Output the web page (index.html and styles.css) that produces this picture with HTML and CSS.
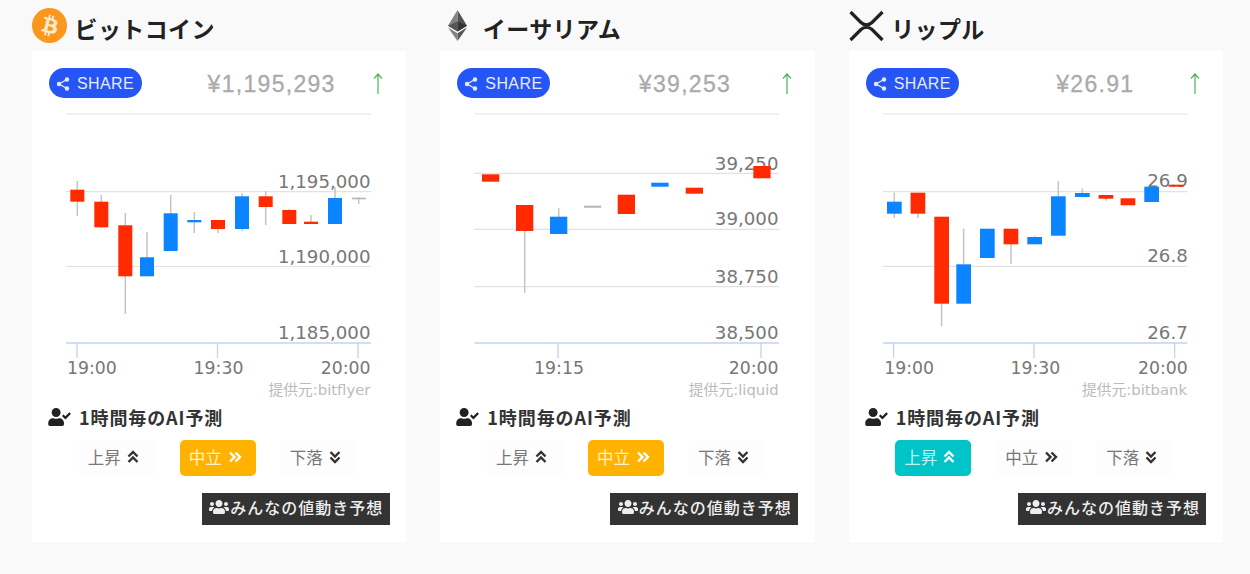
FILE: index.html
```html
<!DOCTYPE html>
<html lang="ja">
<head>
    <meta charset="UTF-8">
    <title>ビットコイン・イーサリアム・リップル</title>
    <link rel="stylesheet" href="styles.css">
</head>
<body>
<div class="coins">

    <!-- bitcoin -->
    <section class="coin">
        <h2 class="coin-title">
            <span class="coin-icon">
                <svg width="35" height="35" viewBox="0 0 32 32"><circle cx="16" cy="16" r="16" fill="#f9981c"/><path fill="#ffe9cc" d="M23.189 14.02c.314-2.096-1.283-3.223-3.465-3.975l.708-2.84-1.728-.43-.69 2.765c-.454-.114-.92-.22-1.385-.326l.695-2.783L15.596 6l-.708 2.839c-.376-.086-.746-.17-1.104-.26l.002-.009-2.384-.595-.46 1.846s1.283.294 1.256.312c.7.175.826.638.805 1.006l-.806 3.235c.048.012.11.03.18.057l-.183-.045-1.13 4.532c-.086.212-.303.531-.793.41.018.025-1.256-.313-1.256-.313l-.858 1.978 2.25.561c.418.105.828.215 1.231.318l-.715 2.872 1.727.43.708-2.84c.472.127.93.245 1.378.357l-.706 2.828 1.728.43.715-2.866c2.948.558 5.164.333 6.097-2.333.752-2.146-.037-3.385-1.588-4.192 1.13-.26 1.98-1.003 2.207-2.538zm-3.95 5.538c-.533 2.147-4.148.986-5.32.695l.95-3.805c1.172.293 4.929.872 4.37 3.11zm.535-5.569c-.487 1.953-3.495.96-4.47.717l.86-3.45c.975.243 4.118.696 3.61 2.733z"/></svg>
            </span>
            <span class="coin-name">ビットコイン</span>
        </h2>
        <div class="card">
            <div class="card-head">
                <a class="share">
                    <svg width="14" height="14" viewBox="0 0 14 14"><path class="share-line" d="M11 2.500 3 7l8 4.500"/><circle cx="11" cy="2.500" r="2.200"/><circle cx="3" cy="7" r="2.200"/><circle cx="11" cy="11.500" r="2.200"/></svg>
                    SHARE
                </a>
                <span class="price">¥1,195,293</span>
                <svg class="arrow" width="12" height="21" viewBox="0 0 12 21"><path d="M6 21V1M2 5.500 6 1l4 4.500"/></svg>
            </div>
            <svg class="chart" width="374" height="272" viewBox="32 108 374 272">
                <path class="grid" d="M66 114H371M66 191.700H371M66 266.500H371"/>
                <path class="axis" d="M66 343H371M77 343V358M217.500 343V358M358 343V358"/>
                <text class="label" x="370.500" y="188">1,195,000</text>
                <text class="label" x="370.500" y="263">1,190,000</text>
                <text class="label" x="370.500" y="339">1,185,000</text>
                <text class="time time-start" x="67" y="374">19:00</text>
                <text class="time time-mid" x="218.500" y="374">19:30</text>
                <text class="time" x="370.500" y="374">20:00</text>
                <path class="wick" d="M77.300 181V216M101.300 195V228M125.300 213V314M147 232V276M170.700 195V251M194.300 212V233M218 220V233M242 193V231M265.700 191V225M289.300 209V224M311 215V224M335 187V224M358.700 197V204"/>
                <rect class="down" x="70.300" y="189.700" width="14" height="12"/>
                <rect class="down" x="94.300" y="201.700" width="14" height="25.600"/>
                <rect class="down" x="118.300" y="225.300" width="14" height="51"/>
                <rect class="up" x="140" y="257.300" width="14" height="19"/>
                <rect class="up" x="163.700" y="213.300" width="14" height="37.700"/>
                <rect class="up" x="187.300" y="220" width="14" height="2.300"/>
                <rect class="down" x="211" y="220" width="14" height="9"/>
                <rect class="up" x="235" y="196.300" width="14" height="32.700"/>
                <rect class="down" x="258.700" y="196.300" width="14" height="10.700"/>
                <rect class="down" x="282.300" y="210" width="14" height="14"/>
                <rect class="down" x="304" y="221.700" width="14" height="2.300"/>
                <rect class="up" x="328" y="198" width="14" height="26"/>
                <rect class="flat" x="352" y="197.700" width="14" height="1.600"/>
            </svg>
            <p class="source">提供元:bitflyer</p>
            <h3 class="forecast">
                <svg width="23" height="18" viewBox="0 0 640 512"><path d="M224 256c70.700 0 128-57.300 128-128S294.700 0 224 0 96 57.300 96 128s57.300 128 128 128zm89.600 32h-16.700c-22.200 10.200-46.900 16-72.900 16s-50.600-5.800-72.900-16h-16.700C60.200 288 0 348.200 0 422.400V464c0 26.500 21.500 48 48 48h352c26.500 0 48-21.500 48-48v-41.600c0-74.200-60.200-134.400-134.400-134.400zm323-128.400l-27.800-28.100c-4.600-4.700-12.100-4.700-16.800-.1l-104.800 104-45.500-45.800c-4.600-4.700-12.100-4.700-16.800-.1l-28.100 27.900c-4.700 4.600-4.700 12.100-.1 16.800l81.700 82.300c4.600 4.700 12.100 4.700 16.800.1l141.300-140.200c4.600-4.700 4.700-12.200.1-16.800z"/></svg>
                1時間毎のAI予測
            </h3>
            <div class="votes">
                <span class="vote">上昇<svg class="chev" width="12" height="14" viewBox="0 0 12 14"><path d="M1.500 6.500 6 2l4.500 4.500M1.500 12 6 7.500l4.500 4.500"/></svg></span>
                <span class="vote vote-flat">中立<svg class="chev" width="14" height="12" viewBox="0 0 14 12"><path d="M2 1.500 6.500 6 2 10.500M7.500 1.500 12 6l-4.500 4.500"/></svg></span>
                <span class="vote">下落<svg class="chev" width="12" height="14" viewBox="0 0 12 14"><path d="M1.500 2 6 6.500 10.500 2M1.500 7.500 6 12l4.500-4.500"/></svg></span>
            </div>
            <a class="everyone">
                <svg width="20" height="16" viewBox="0 0 640 512"><path d="M96 224c35.300 0 64-28.700 64-64s-28.700-64-64-64-64 28.700-64 64 28.700 64 64 64zm448 0c35.300 0 64-28.700 64-64s-28.700-64-64-64-64 28.700-64 64 28.700 64 64 64zm32 32h-64c-17.600 0-33.500 7.100-45.100 18.600 40.300 22.100 68.900 62 75.100 109.400h66c17.700 0 32-14.300 32-32v-32c0-35.300-28.700-64-64-64zm-256 0c61.900 0 112-50.100 112-112S381.900 32 320 32 208 82.100 208 144s50.100 112 112 112zm76.800 32h-8.300c-20.800 10-43.900 16-68.500 16s-47.600-6-68.500-16h-8.300C179.600 288 128 339.600 128 403.200V432c0 26.500 21.500 48 48 48h288c26.500 0 48-21.500 48-48v-28.800c0-63.600-51.600-115.200-115.200-115.200zm-223.700-13.400C161.500 263.100 145.600 256 128 256H64c-35.300 0-64 28.700-64 64v32c0 17.700 14.300 32 32 32h65.900c6.300-47.400 34.900-87.300 75.200-109.400z"/></svg>みんなの値動き予想
            </a>
        </div>
    </section>

    <!-- ethereum -->
    <section class="coin">
        <h2 class="coin-title">
            <span class="coin-icon coin-icon-eth">
                <svg width="19" height="31" viewBox="0 0 256 417"><path fill="#343434" d="M128 0 256 212 128 288z"/><path fill="#6e6e6e" d="M128 0 0 212l128 76z"/><path fill="#3c3c3b" d="M128 312v105l128-180z"/><path fill="#6e6e6e" d="M128 417V312L0 237z"/><path fill="#141414" d="m128 288 128-76-128-58z"/><path fill="#393939" d="m0 212 128 76V154z"/></svg>
            </span>
            <span class="coin-name">イーサリアム</span>
        </h2>
        <div class="card">
            <div class="card-head">
                <a class="share">
                    <svg width="14" height="14" viewBox="0 0 14 14"><path class="share-line" d="M11 2.500 3 7l8 4.500"/><circle cx="11" cy="2.500" r="2.200"/><circle cx="3" cy="7" r="2.200"/><circle cx="11" cy="11.500" r="2.200"/></svg>
                    SHARE
                </a>
                <span class="price price-eth">¥39,253</span>
                <svg class="arrow" width="12" height="21" viewBox="0 0 12 21"><path d="M6 21V1M2 5.500 6 1l4 4.500"/></svg>
            </div>
            <svg class="chart" width="374" height="272" viewBox="440 108 374 272">
                <path class="grid" d="M474.500 114H779M474.500 173.300H779M474.500 229.300H779M474.500 286.700H779"/>
                <path class="axis" d="M474.500 343H779M558 343V358M761 343V358"/>
                <text class="label" x="778.500" y="170">39,250</text>
                <text class="label" x="778.500" y="225">39,000</text>
                <text class="label" x="778.500" y="283">38,750</text>
                <text class="label" x="778.500" y="339">38,500</text>
                <text class="time time-mid" x="559" y="374">19:15</text>
                <text class="time" x="778.500" y="374">20:00</text>
                <path class="wick" d="M524.700 231V292.700M558.700 208.300V234"/>
                <rect class="down" x="482" y="174.300" width="17.300" height="7.400"/>
                <rect class="down" x="516" y="205" width="17.300" height="26"/>
                <rect class="up" x="550" y="216.700" width="17.300" height="17.300"/>
                <rect class="flat" x="584" y="205.700" width="17.300" height="2"/>
                <rect class="down" x="617.700" y="194.700" width="17.300" height="19.300"/>
                <rect class="up" x="651.300" y="182.700" width="17.300" height="4"/>
                <rect class="down" x="685.700" y="187.700" width="17.300" height="6"/>
                <rect class="down" x="753.300" y="166" width="17.300" height="12.300"/>
            </svg>
            <p class="source">提供元:liquid</p>
            <h3 class="forecast">
                <svg width="23" height="18" viewBox="0 0 640 512"><path d="M224 256c70.700 0 128-57.300 128-128S294.700 0 224 0 96 57.300 96 128s57.300 128 128 128zm89.600 32h-16.700c-22.200 10.200-46.900 16-72.900 16s-50.600-5.800-72.900-16h-16.700C60.200 288 0 348.200 0 422.400V464c0 26.500 21.500 48 48 48h352c26.500 0 48-21.500 48-48v-41.600c0-74.200-60.200-134.400-134.400-134.400zm323-128.400l-27.800-28.100c-4.600-4.700-12.100-4.700-16.800-.1l-104.800 104-45.500-45.800c-4.600-4.700-12.100-4.700-16.800-.1l-28.100 27.900c-4.700 4.600-4.700 12.100-.1 16.800l81.700 82.300c4.600 4.700 12.100 4.700 16.800.1l141.300-140.200c4.600-4.700 4.700-12.200.1-16.800z"/></svg>
                1時間毎のAI予測
            </h3>
            <div class="votes">
                <span class="vote">上昇<svg class="chev" width="12" height="14" viewBox="0 0 12 14"><path d="M1.500 6.500 6 2l4.500 4.500M1.500 12 6 7.500l4.500 4.500"/></svg></span>
                <span class="vote vote-flat">中立<svg class="chev" width="14" height="12" viewBox="0 0 14 12"><path d="M2 1.500 6.500 6 2 10.500M7.500 1.500 12 6l-4.500 4.500"/></svg></span>
                <span class="vote">下落<svg class="chev" width="12" height="14" viewBox="0 0 12 14"><path d="M1.500 2 6 6.500 10.500 2M1.500 7.500 6 12l4.500-4.500"/></svg></span>
            </div>
            <a class="everyone">
                <svg width="20" height="16" viewBox="0 0 640 512"><path d="M96 224c35.300 0 64-28.700 64-64s-28.700-64-64-64-64 28.700-64 64 28.700 64 64 64zm448 0c35.300 0 64-28.700 64-64s-28.700-64-64-64-64 28.700-64 64 28.700 64 64 64zm32 32h-64c-17.600 0-33.500 7.100-45.100 18.600 40.300 22.100 68.900 62 75.100 109.400h66c17.700 0 32-14.300 32-32v-32c0-35.300-28.700-64-64-64zm-256 0c61.900 0 112-50.100 112-112S381.900 32 320 32 208 82.100 208 144s50.100 112 112 112zm76.800 32h-8.300c-20.800 10-43.900 16-68.500 16s-47.600-6-68.500-16h-8.300C179.600 288 128 339.600 128 403.200V432c0 26.500 21.500 48 48 48h288c26.500 0 48-21.500 48-48v-28.800c0-63.600-51.600-115.200-115.200-115.200zm-223.700-13.400C161.500 263.100 145.600 256 128 256H64c-35.300 0-64 28.700-64 64v32c0 17.700 14.300 32 32 32h65.900c6.300-47.400 34.900-87.300 75.200-109.400z"/></svg>みんなの値動き予想
            </a>
        </div>
    </section>

    <!-- ripple -->
    <section class="coin">
        <h2 class="coin-title">
            <span class="coin-icon">
                <svg class="xrp" width="35" height="32" viewBox="0 0 35 32"><path d="M1.500 2 12 12.500c3 3 8 3 11 0L33.500 2M1.500 30 12 19.500c3-3 8-3 11 0L33.500 30"/></svg>
            </span>
            <span class="coin-name">リップル</span>
        </h2>
        <div class="card">
            <div class="card-head">
                <a class="share">
                    <svg width="14" height="14" viewBox="0 0 14 14"><path class="share-line" d="M11 2.500 3 7l8 4.500"/><circle cx="11" cy="2.500" r="2.200"/><circle cx="3" cy="7" r="2.200"/><circle cx="11" cy="11.500" r="2.200"/></svg>
                    SHARE
                </a>
                <span class="price price-xrp">¥26.91</span>
                <svg class="arrow" width="12" height="21" viewBox="0 0 12 21"><path d="M6 21V1M2 5.500 6 1l4 4.500"/></svg>
            </div>
            <svg class="chart" width="374" height="272" viewBox="848.700 108 374 272">
                <path class="grid" d="M882.700 114H1187M882.700 191.700H1187M882.700 266.300H1187"/>
                <path class="axis" d="M882.700 343H1187M893.300 343V358M1033.700 343V358M1174.300 343V358"/>
                <text class="label" x="1187.500" y="187">26.9</text>
                <text class="label" x="1187.500" y="262">26.8</text>
                <text class="label" x="1187.500" y="339">26.7</text>
                <text class="time time-start" x="884" y="374">19:00</text>
                <text class="time time-mid" x="1035" y="374">19:30</text>
                <text class="time" x="1187.500" y="374">20:00</text>
                <path class="wick" d="M894 192.700V218M917.700 192.700V218M941.300 216.700V326.300M963.300 228.700V264M1010.700 244V263.700M1034.300 235.700V244M1058 181.300V197M1082 188.300V197M1105.700 195V200.700"/>
                <rect class="up" x="886.700" y="201.700" width="14.700" height="12"/>
                <rect class="down" x="910.300" y="192.700" width="14.700" height="21"/>
                <rect class="down" x="934" y="216.700" width="14.700" height="87"/>
                <rect class="up" x="956" y="264.300" width="14.700" height="39.400"/>
                <rect class="up" x="979.700" y="228.700" width="14.700" height="29.300"/>
                <rect class="down" x="1003.300" y="228.700" width="14.700" height="15.600"/>
                <rect class="up" x="1027" y="237" width="14.700" height="7.300"/>
                <rect class="up" x="1050.700" y="196.300" width="14.700" height="39.400"/>
                <rect class="up" x="1074.700" y="193" width="14.700" height="4"/>
                <rect class="down" x="1098.300" y="195" width="14.700" height="3.700"/>
                <rect class="down" x="1120.300" y="198.300" width="14.700" height="7"/>
                <rect class="up" x="1144" y="186.700" width="14.700" height="15.300"/>
                <rect class="down" x="1168.300" y="184.700" width="14.700" height="2"/>
            </svg>
            <p class="source">提供元:bitbank</p>
            <h3 class="forecast">
                <svg width="23" height="18" viewBox="0 0 640 512"><path d="M224 256c70.700 0 128-57.300 128-128S294.700 0 224 0 96 57.300 96 128s57.300 128 128 128zm89.600 32h-16.700c-22.200 10.200-46.900 16-72.900 16s-50.600-5.800-72.900-16h-16.700C60.200 288 0 348.200 0 422.400V464c0 26.500 21.500 48 48 48h352c26.500 0 48-21.500 48-48v-41.600c0-74.200-60.200-134.400-134.400-134.400zm323-128.400l-27.800-28.100c-4.600-4.700-12.100-4.700-16.800-.1l-104.800 104-45.500-45.800c-4.600-4.700-12.100-4.700-16.800-.1l-28.100 27.900c-4.700 4.600-4.700 12.100-.1 16.800l81.700 82.300c4.600 4.700 12.100 4.700 16.800.1l141.300-140.200c4.600-4.700 4.700-12.200.1-16.800z"/></svg>
                1時間毎のAI予測
            </h3>
            <div class="votes">
                <span class="vote vote-up">上昇<svg class="chev" width="12" height="14" viewBox="0 0 12 14"><path d="M1.500 6.500 6 2l4.500 4.500M1.500 12 6 7.500l4.500 4.500"/></svg></span>
                <span class="vote">中立<svg class="chev" width="14" height="12" viewBox="0 0 14 12"><path d="M2 1.500 6.500 6 2 10.500M7.500 1.500 12 6l-4.500 4.500"/></svg></span>
                <span class="vote">下落<svg class="chev" width="12" height="14" viewBox="0 0 12 14"><path d="M1.500 2 6 6.500 10.500 2M1.500 7.500 6 12l4.500-4.500"/></svg></span>
            </div>
            <a class="everyone">
                <svg width="20" height="16" viewBox="0 0 640 512"><path d="M96 224c35.300 0 64-28.700 64-64s-28.700-64-64-64-64 28.700-64 64 28.700 64 64 64zm448 0c35.300 0 64-28.700 64-64s-28.700-64-64-64-64 28.700-64 64 28.700 64 64 64zm32 32h-64c-17.600 0-33.500 7.100-45.100 18.600 40.300 22.100 68.900 62 75.100 109.400h66c17.700 0 32-14.300 32-32v-32c0-35.300-28.700-64-64-64zm-256 0c61.900 0 112-50.100 112-112S381.900 32 320 32 208 82.100 208 144s50.100 112 112 112zm76.800 32h-8.300c-20.800 10-43.900 16-68.500 16s-47.600-6-68.500-16h-8.300C179.600 288 128 339.600 128 403.200V432c0 26.500 21.500 48 48 48h288c26.500 0 48-21.500 48-48v-28.800c0-63.600-51.600-115.200-115.200-115.200zm-223.700-13.400C161.500 263.100 145.600 256 128 256H64c-35.300 0-64 28.700-64 64v32c0 17.700 14.300 32 32 32h65.900c6.300-47.400 34.900-87.300 75.200-109.400z"/></svg>みんなの値動き予想
            </a>
        </div>
    </section>

</div>
</body>
</html>
```

FILE: styles.css
```css
body {
    margin: 0;
    background-color: #f9f9f9;
    color: #222;
    font-family: "Liberation Sans", "Noto Sans CJK JP", sans-serif;
}
.coins {
    display: flex;
    gap: 34px;
    padding: 8px 0 0 32px;
}
.coin {
    width: 374.33px;
}
.coin-title {
    display: flex;
    align-items: center;
    gap: 7.500px;
    height: 35px;
    margin: 0 0 8px;
    font-family: "Noto Sans CJK JP", sans-serif;
    font-size: 23px;
    font-weight: 700;
    letter-spacing: 0.400px;
    line-height: 1;
}
.coin-name {
    padding-top: 6px;
}
.coin-icon {
    display: flex;
    justify-content: center;
    align-items: center;
    width: 35px;
    height: 35px;
}
.coin-icon-eth svg {
    opacity: 0.85;
}
.xrp path {
    fill: none;
    stroke: #222;
    stroke-width: 3.200;
}
.card {
    display: flex;
    flex-direction: column;
    height: 490.500px;
    padding-top: 17px;
    box-sizing: border-box;
    background-color: #fff;
}
.card-head {
    display: flex;
    align-items: center;
    height: 30px;
    padding: 0 22px 0 17px;
}
.share {
    display: flex;
    align-items: center;
    gap: 7px;
    width: 93px;
    height: 30px;
    box-sizing: border-box;
    padding: 2px 0 0 7px;
    border-radius: 15px;
    background-color: #2655f6;
    color: #e6ebff;
    font-size: 16px;
    letter-spacing: 0.400px;
}
.share circle {
    fill: #e6ebff;
}
.share-line {
    fill: none;
    stroke: #e6ebff;
    stroke-width: 1.300;
}
.price {
    flex: 1;
    margin-left: 29px;
    padding-top: 2px;
    text-align: center;
    color: #aaa;
    font-size: 23px;
    letter-spacing: 1.300px;
    -webkit-text-stroke: 0.300px #aaa;
}
.price-eth {
    margin-left: 39px;
}
.price-xrp {
    margin-left: 43px;
}
.arrow path {
    fill: none;
    stroke: #4db356;
    stroke-width: 1.200;
}
.chart {
    display: block;
    margin-top: 10px;
}
.grid {
    fill: none;
    stroke: #e2e2e2;
    stroke-width: 1.200;
}
.axis {
    fill: none;
    stroke: #c5d3ee;
    stroke-width: 1.300;
}
.wick {
    fill: none;
    stroke: #c4c4c4;
    stroke-width: 1.500;
}
.up {
    fill: #0a84ff;
}
.down {
    fill: #ff2a00;
}
.flat {
    fill: #b5b5b5;
}
.label,
.time {
    fill: #777;
    font-family: "DejaVu Sans", sans-serif;
    text-anchor: end;
}
.label {
    font-size: 18.200px;
}
.time {
    font-size: 17.300px;
}
.time-start {
    text-anchor: start;
}
.time-mid {
    text-anchor: middle;
}
.source {
    margin: 0;
    height: 20px;
    padding-right: 36px;
    text-align: right;
    color: #bbb;
    font-family: "DejaVu Sans", "Noto Sans CJK JP", sans-serif;
    font-size: 14.800px;
    line-height: 19px;
}
.forecast {
    display: flex;
    align-items: center;
    gap: 8px;
    height: 24px;
    margin: 5px 0 1px;
    padding-left: 16px;
    color: #333;
    font-family: "Noto Sans CJK JP", sans-serif;
    font-size: 18px;
    font-weight: 700;
    letter-spacing: 0.900px;
}
.forecast svg {
    fill: #222;
}
.votes {
    display: flex;
    gap: 25px;
    margin-top: 10px;
    padding-left: 46.700px;
}
.vote {
    display: flex;
    align-items: center;
    gap: 6px;
    width: 76px;
    height: 36px;
    box-sizing: border-box;
    padding: 0 0 2px 9px;
    border-radius: 5px;
    background-color: #fdfdfd;
    color: #777;
    font-family: "Noto Sans CJK JP", sans-serif;
    font-size: 16.500px;
}
.chev path {
    fill: none;
    stroke: #333;
    stroke-width: 2.400;
}
.vote-flat {
    background-color: #ffb300;
    color: #fff2d0;
}
.vote-up {
    background-color: #00c4c8;
    color: #c8f2f2;
}
.vote-flat .chev path,
.vote-up .chev path {
    stroke: #fff;
}
.everyone {
    display: flex;
    align-items: center;
    align-self: flex-end;
    gap: 1px;
    width: 188px;
    height: 32px;
    box-sizing: border-box;
    margin: 16.500px 16.500px 0 0;
    padding: 0 0 4px 7.500px;
    background-color: #333;
    color: #eee;
    font-family: "Noto Sans CJK JP", sans-serif;
    font-size: 16px;
    font-weight: 500;
    letter-spacing: 1px;
    white-space: nowrap;
}
.everyone svg {
    fill: #eee;
}
```
